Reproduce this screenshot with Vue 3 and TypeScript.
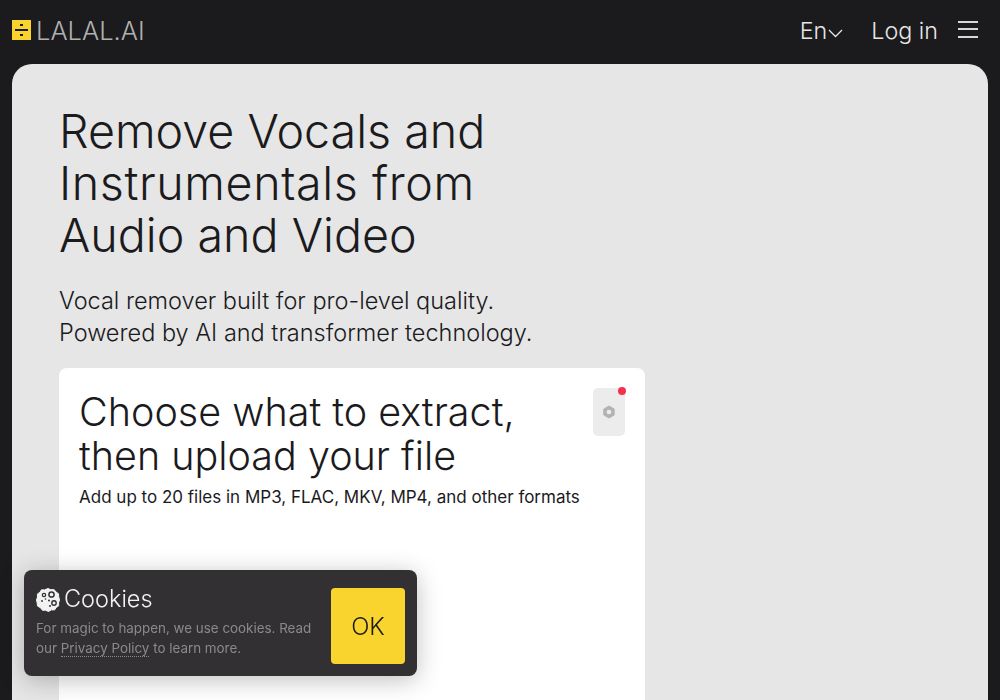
<template>
  <div class="page">
    <header class="topbar">
      <a class="logo">
        <span class="logo-mark">
          <svg width="19" height="20" viewBox="0 0 19 20">
            <rect width="19" height="20" fill="#fad42e" />
            <rect x="8" y="4" width="3" height="2" fill="#1b1a1d" />
            <rect x="3" y="9" width="13" height="2" fill="#1b1a1d" />
            <rect x="8" y="14" width="3" height="2" fill="#1b1a1d" />
          </svg>
        </span>
        <span class="logo-text">LALAL.AI</span>
      </a>
      <nav class="nav">
        <button class="lang">
          En
          <svg width="15" height="9" viewBox="0 0 15 9" fill="none">
            <path d="M1 1l6.500 6.500L14 1" stroke="#e6e6e6" stroke-width="1.300" />
          </svg>
        </button>
        <button class="login">Log in</button>
        <button class="burger" aria-label="Menu"><i></i><i></i><i></i></button>
      </nav>
    </header>

    <main class="card">
      <h1>Remove Vocals and<br /><span class="wide">Instrumentals from</span><br />Audio and Video</h1>
      <p class="lead">Vocal remover built for pro-level quality.<br />Powered by AI and transformer technology.</p>

      <section class="panel">
        <div class="panel-head">
          <div>
            <h2>Choose what to extract,<br />then upload your file</h2>
            <p class="formats">Add up to 20 files in MP3, FLAC, MKV, MP4, and other formats</p>
          </div>
          <button class="settings" aria-label="Settings">
            <svg width="14" height="14" viewBox="0 0 14 14" fill="none">
              <path d="M7 1l5.200 3v6L7 13l-5.200-3V4z" fill="#b3b3b3" stroke="#b3b3b3" stroke-linejoin="round" />
              <circle cx="7" cy="7" r="2.300" fill="#ececec" />
            </svg>
            <span class="dot"></span>
          </button>
        </div>
      </section>
    </main>

    <aside class="cookies">
      <div class="cookies-copy">
        <div class="cookies-title">
          <svg width="24" height="24" viewBox="0 0 24 24">
            <path d="M12 .5l3 1.300 3-.3 2 2.500 2.500 1.700.2 3L23.500 12l-1 3 .2 2.800-2.500 1.700-1.700 2.500-3-.2-3 1.700-3-1.300-3 .1-1.800-2.400L1.500 18l-.3-3L.5 12l1-3-.1-3 2.500-1.700L5.500 1.800l3 .1z" fill="#f2f2f2" stroke="#f2f2f2" stroke-linejoin="round" />
            <circle cx="15.500" cy="6.500" r="2.600" fill="none" stroke="#323033" stroke-width="1.500" />
            <circle cx="8" cy="7" r="1.700" fill="none" stroke="#323033" stroke-width="1.200" />
            <circle cx="18" cy="15" r="2.200" fill="none" stroke="#323033" stroke-width="1.400" />
            <circle cx="13" cy="12.500" r="1" fill="#323033" />
            <circle cx="6" cy="13" r=".9" fill="#323033" />
            <circle cx="9.500" cy="11" r=".8" fill="#323033" />
            <circle cx="14" cy="18" r="1" fill="#323033" />
          </svg>
          <span>Cookies</span>
        </div>
        <p>For magic to happen, we use cookies. Read our <a>Privacy Policy</a> to learn more.</p>
      </div>
      <button class="ok">OK</button>
    </aside>
  </div>
</template>

<script setup lang="ts">
</script>

<style>
html,
body {
  margin: 0;
  height: 700px;
  overflow: hidden;
  background: #1b1a1d;
}
</style>

<style scoped>
.page {
  height: 700px;
  overflow: hidden;
  background: #1b1a1d;
  font-family: Inter, "Liberation Sans", sans-serif;
  color: #1b1a1d;
}
button {
  font: inherit;
  color: inherit;
  background: none;
  border: 0;
  padding: 0;
}
.topbar {
  height: 64px;
  padding: 0 22px 0 12px;
  display: flex;
  align-items: center;
  justify-content: space-between;
  color: #e6e6e6;
}
.logo {
  display: flex;
  align-items: center;
  gap: 5px;
}
.logo-mark {
  display: flex;
  margin-top: -4px;
}
.logo-text {
  font-size: 25.500px;
  font-weight: 300;
  color: #b0b0b0;
  margin-top: -4px;
}
.nav {
  display: flex;
  align-items: center;
  font-size: 23.300px;
  font-weight: 300;
  margin-top: -3px;
}
.lang {
  display: flex;
  align-items: center;
  gap: 1px;
  margin-right: 28px;
}
.lang svg {
  margin-top: 6px;
}
.login {
  margin-right: 20px;
}
.burger {
  width: 20px;
  display: flex;
  flex-direction: column;
  gap: 5.500px;
  margin-top: -3px;
}
.burger i {
  display: block;
  height: 2px;
  background: #d8d8d8;
}
.card {
  height: 700px;
  margin: 0 12px;
  padding: 41px 47px;
  box-sizing: border-box;
  background: #e6e6e6;
  border-radius: 20px;
}
h1 {
  margin: 0;
  font-size: 46.600px;
  line-height: 52px;
  font-weight: 300;
}
.wide {
  letter-spacing: 0.6px;
}
.lead {
  margin: 24px 0 0;
  font-size: 23.500px;
  line-height: 32px;
  font-weight: 300;
}
.panel {
  width: 586px;
  height: 500px;
  margin-top: 19px;
  padding: 22px 20px;
  box-sizing: border-box;
  background: #fff;
  border-radius: 8px;
}
.panel-head {
  display: flex;
  justify-content: space-between;
  align-items: flex-start;
}
h2 {
  margin: 0;
  font-size: 39.500px;
  line-height: 44px;
  font-weight: 300;
}
.formats {
  margin: 7px 0 0;
  font-size: 17px;
  line-height: 24px;
  font-weight: 400;
}
.settings {
  position: relative;
  width: 32px;
  height: 48px;
  display: flex;
  align-items: center;
  justify-content: center;
  background: #ececec;
  border-radius: 5px;
  margin-top: -2px;
}
.dot {
  position: absolute;
  top: -1px;
  right: -1px;
  width: 8px;
  height: 8px;
  background: #f4304a;
  border-radius: 50%;
}
.cookies {
  position: fixed;
  left: 24px;
  top: 570px;
  width: 393px;
  height: 106px;
  box-sizing: border-box;
  padding: 18px 12px;
  display: flex;
  justify-content: space-between;
  background: #323033;
  border-radius: 8px;
  box-shadow: 0 4px 24px rgba(0, 0, 0, 0.25);
}
.cookies-copy {
  width: 285px;
}
.cookies-title {
  display: flex;
  align-items: center;
  gap: 4px;
  font-size: 23.500px;
  font-weight: 300;
  color: #f2f2f2;
  line-height: 22px;
}
.cookies-title span {
  margin-top: -3px;
}
.cookies-copy p {
  margin: 6px 0 0;
  font-size: 13.400px;
  line-height: 20px;
  font-weight: 400;
  color: #8a8a8a;
}
.cookies-copy a {
  border-bottom: 1px dotted #8a8a8a;
}
.ok {
  width: 74px;
  height: 76px;
  background: #fad42e;
  border-radius: 4px;
  font-size: 24px;
  font-weight: 300;
  color: #1b1a1d;
}
</style>
